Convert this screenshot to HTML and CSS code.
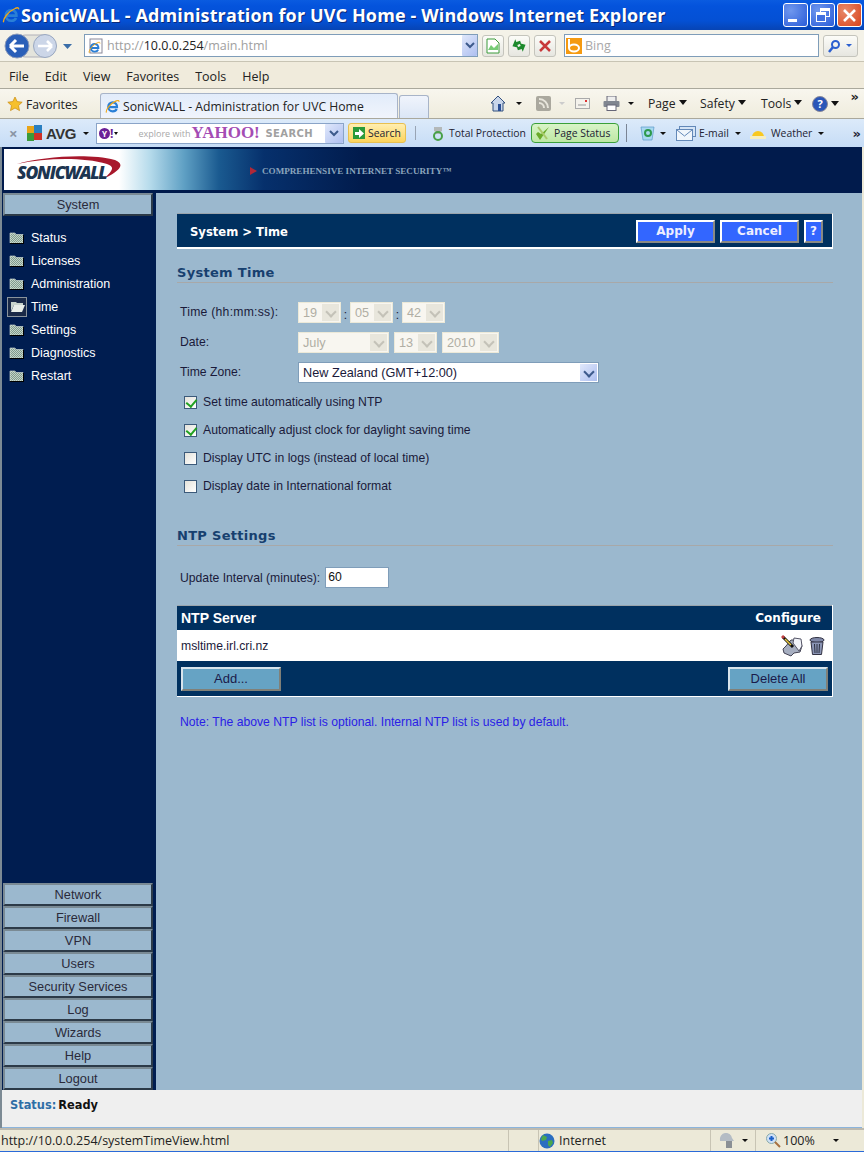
FILE: index.html
```html
<!DOCTYPE html>
<html lang="en">
<head>
    <meta charset="UTF-8">
    <title>SonicWALL - Administration for UVC Home</title>
    <link rel="stylesheet" href="styles.css">
</head>
<body>
    <svg class="defs" width="0" height="0">
        <defs>
            <pattern id="dither" width="2" height="2" patternUnits="userSpaceOnUse">
                <rect width="2" height="2" fill="#7f9a8c"/>
                <rect width="1" height="1" fill="#c4d4c8"/>
                <rect x="1" y="1" width="1" height="1" fill="#c4d4c8"/>
            </pattern>
        </defs>
        <symbol id="ie" viewBox="0 0 16 16">
            <path d="M3.6 8.6h9.2c.2-3-1.800-5-4.500-5-2.700 0-4.800 2-4.800 4.800 0 2.800 2 4.700 4.800 4.700 2 0 3.500-.9 4.200-2.500" fill="none" stroke="#2a7fd6" stroke-width="2.400"/>
            <path d="M1.500 14.500C.5 12 5 5 12 2c2-.8 3-.4 2.800 1" fill="none" stroke="#f0a818" stroke-width="1.200"/>
        </symbol>
        <symbol id="folder" viewBox="0 0 15 13">
            <path d="M1 2h5l1 1.500h7V12H1z" fill="url(#dither)" stroke="#dfe8df" stroke-width=".6"/>
            <path d="M1 12.500h14M14.500 4v9" stroke="#000" stroke-width="1"/>
        </symbol>
    </svg>

    <!-- Window title -->
    <div class="titlebar">
        <svg class="title-ie"><use href="#ie"/></svg>
        <span class="title-text">SonicWALL - Administration for UVC Home - Windows Internet Explorer</span>
        <div class="winbtns">
            <div class="winbtn"><span class="min-bar"></span></div>
            <div class="winbtn"><span class="max-back"></span><span class="max-front"></span></div>
            <div class="winbtn close">
                <svg width="15" height="15" viewBox="0 0 15 15"><path d="M2 2l11 11M13 2L2 13" stroke="#fff" stroke-width="2.600"/></svg>
            </div>
        </div>
    </div>

    <!-- Address bar -->
    <div class="addressbar">
        <svg class="nav-arrows" width="74" height="28" viewBox="0 0 74 28">
            <rect x="14" y="3" width="42" height="22" rx="11" fill="#e4e4dc" stroke="#b0b0b8"/>
            <circle cx="17" cy="14" r="12" fill="#2a5fb8" stroke="#8c9bb8"/>
            <path d="M10 14h14M10 14l6-6M10 14l6 6" stroke="#fff" stroke-width="3" fill="none"/>
            <circle cx="45" cy="14" r="11.500" fill="#ccd6e8" stroke="#9aa8c0"/>
            <path d="M52 14H38M52 14l-5-5M52 14l-5 5" stroke="#fff" stroke-width="2.600" fill="none"/>
            <path d="M63 12h9l-4.500 5z" fill="#3a6ea8"/>
        </svg>
        <div class="urlbox">
            <svg class="page-ie" viewBox="0 0 16 16"><rect x="2" y="1" width="12" height="14" fill="#fff" stroke="#889"/><use href="#ie" width="13" height="13" y="3" x="0"/></svg>
            <span class="url-dim">http://</span><span class="url-host">10.0.0.254</span><span class="url-dim">/main.html</span>
            <span class="xp-arrow url-arrow"><svg width="10" height="7" viewBox="0 0 10 7"><path d="M1 1l4 4 4-4" fill="none" stroke="#3d5a8c" stroke-width="2"/></svg></span>
        </div>
        <div class="toolbtn btn-compat">
            <svg width="14" height="16" viewBox="0 0 14 16"><path d="M1 1h8l4 4v10H1z" fill="#fff" stroke="#3a9a3a"/><path d="M2 12l3-5 3 3 4-4v6z" fill="#7c7"/></svg>
        </div>
        <div class="toolbtn btn-refresh">
            <svg width="16" height="15" viewBox="0 0 16 15"><path d="M1 6.500L6 1v3h4v3H6v3z" fill="#1d8a2c" transform="rotate(-20 6 6)"/><path d="M15 8.500L10 14v-3H6V8h4V5z" fill="#1d8a2c" transform="rotate(-20 10 9)"/></svg>
        </div>
        <div class="toolbtn btn-stop">
            <svg width="12" height="12" viewBox="0 0 12 12"><path d="M1 1l10 10M11 1L1 11" stroke="#c8383a" stroke-width="2.500"/></svg>
        </div>
        <div class="searchbox">
            <span class="bing-logo"><svg width="16" height="16" viewBox="0 0 16 16"><path d="M3 1v9" stroke="#fff" stroke-width="2"/><ellipse cx="8" cy="10" rx="5" ry="3.500" fill="none" stroke="#fff" stroke-width="2"/></svg></span>
            <span class="bing-text">Bing</span>
        </div>
        <div class="toolbtn btn-go">
            <svg width="14" height="14" viewBox="0 0 14 14"><circle cx="8.500" cy="5.500" r="3.500" fill="none" stroke="#2b5fd0" stroke-width="2"/><path d="M6 8l-4 5" stroke="#2b5fd0" stroke-width="2.500"/></svg>
            <span class="caret go-caret"></span>
        </div>
    </div>

    <!-- Menu -->
    <div class="menubar">
        <span>File</span><span>Edit</span><span>View</span><span>Favorites</span><span>Tools</span><span>Help</span>
    </div>

    <!-- Favorites and tabs -->
    <div class="tabbar">
        <svg class="star" width="16" height="16" viewBox="0 0 16 16"><path d="M8 1l2.200 4.600 5 .6-3.700 3.400 1 5L8 12l-4.500 2.600 1-5L.8 6.200l5-.6z" fill="#f6c02c" stroke="#c98a10" stroke-width=".7"/></svg>
        <span class="fav-label">Favorites</span>
        <div class="tab">
            <svg class="tab-ie"><use href="#ie"/></svg>
            <span>SonicWALL - Administration for UVC Home</span>
        </div>
        <div class="newtab"></div>
        <div class="cmdbar">
            <svg class="cmd-home" width="16" height="17" viewBox="0 0 16 17"><path d="M8 1L1 8h2v8h10V8h2z" fill="#c9d6ea" stroke="#33507f"/><rect x="8" y="9" width="3" height="7" fill="#2b4f94"/></svg>
            <span class="caret cmd-caret1"></span>
            <svg class="cmd-rss" width="15" height="15" viewBox="0 0 15 15"><rect width="15" height="15" rx="2" fill="#aaa89e"/><path d="M3 7a5 5 0 015 5M3 3a9 9 0 019 9" fill="none" stroke="#e8e6dc" stroke-width="2"/></svg>
            <span class="caret caret-dim"></span>
            <svg class="cmd-mail" width="15" height="11" viewBox="0 0 15 11"><rect x=".5" y=".5" width="14" height="10" fill="#f4f2ec" stroke="#aaa"/><path d="M3 7h8" stroke="#999"/><rect x="10" y="2" width="2" height="2" fill="#d33"/></svg>
            <svg class="cmd-print" width="17" height="15" viewBox="0 0 17 15"><rect x="4" y="0" width="9" height="6" fill="#eee" stroke="#667"/><rect x=".5" y="5" width="16" height="6" rx="1" fill="#808690"/><rect x="4" y="9" width="9" height="5.500" fill="#fff" stroke="#667"/></svg>
            <span class="caret cmd-caret2"></span>
            <span class="cmd-item cmd-page">Page<span class="caret big"></span></span>
            <span class="cmd-item cmd-safety">Safety<span class="caret big"></span></span>
            <span class="cmd-item cmd-tools">Tools<span class="caret big"></span></span>
            <span class="help-ball">?</span>
            <span class="caret big help-caret"></span>
            <span class="chevron cmd-chev">&raquo;</span>
        </div>
    </div>

    <!-- AVG toolbar -->
    <div class="avgbar">
        <span class="avg-x">&times;</span>
        <svg class="avg-logo" width="17" height="17" viewBox="0 0 17 17"><path d="M1 1h7v7H1z" fill="#e8a418"/><path d="M8 0h8v8H8z" fill="#2a7fc0"/><path d="M1 8h7v8H1z" fill="#3a9a3a"/><path d="M8 8h8v7H8z" fill="#d03028"/></svg>
        <span class="avg-name">AVG</span>
        <span class="caret avg-caret"></span>
        <div class="yahoo-box">
            <span class="y-badge">Y</span><span class="y-bang">!</span><span class="caret y-caret"></span>
            <span class="y-explore">explore with</span>
            <span class="y-name">YAHOO!</span>
            <span class="y-search">SEARCH</span>
            <span class="xp-arrow y-arrow"><svg width="10" height="7" viewBox="0 0 10 7"><path d="M1 1l4 4 4-4" fill="none" stroke="#3d5a8c" stroke-width="2"/></svg></span>
        </div>
        <div class="avg-search">
            <span class="go-icon"><svg width="9" height="9" viewBox="0 0 9 9"><path d="M0 3h4V0l5 4.500L4 9V6H0z" fill="#fff"/></svg></span>
            <span>Search</span>
        </div>
        <span class="dot-sep"></span>
        <svg class="tp-icon" width="12" height="15" viewBox="0 0 12 15"><path d="M2 1h8v4l-2 1v2h-4V6L2 5z" fill="#b4b8b8"/><circle cx="6" cy="10" r="4" fill="none" stroke="#48a048" stroke-width="2"/></svg>
        <span class="tp-label">Total Protection</span>
        <div class="page-status">
            <svg width="15" height="15" viewBox="0 0 15 15"><path d="M1 8l4 6 9-13-8 7-3-2z" fill="#6aaa2a"/><path d="M3 1l9 12" stroke="#a9c96a" stroke-width="2"/></svg>
            <span>Page Status</span>
        </div>
        <span class="bar-sep"></span>
        <svg class="bin-icon" width="15" height="16" viewBox="0 0 15 16"><path d="M1 2h13l-2 13H3z" fill="#a8d8f0" stroke="#5a9ac8" stroke-width=".7"/><circle cx="8" cy="8" r="3" fill="none" stroke="#2c9a4c" stroke-width="2"/></svg>
        <span class="caret bin-caret"></span>
        <svg class="mail-icon" width="20" height="15" viewBox="0 0 20 15"><rect x="3.500" y=".5" width="16" height="10" fill="#d4e4f6" stroke="#6288b8"/><rect x=".5" y="3.500" width="16" height="11" fill="#f0f6fc" stroke="#6288b8"/><path d="M1 4l7.500 6L16 4" fill="none" stroke="#6288b8"/></svg>
        <span class="mail-label">E-mail</span>
        <span class="caret mail-caret"></span>
        <svg class="sun-icon" width="16" height="14" viewBox="0 0 16 14"><path d="M2 11a6 6 0 0112 0z" fill="#f8c820"/><rect y="10" width="16" height="3" fill="#f6eec0"/></svg>
        <span class="weather-label">Weather</span>
        <span class="caret weather-caret"></span>
        <span class="chevron avg-chev">&raquo;</span>
    </div>

    <!-- Page -->
    <div class="page">
        <div class="banner">
            <div class="logo">
                <svg class="logo-arc" width="106" height="23" viewBox="0 0 106 23"><path d="M0 8C25 1 70-3 98 4c10 4 6 10-10 18 8-8 10-11 2-14C65 1 30 2 0 8z" fill="#a8182c"/></svg>
                <span class="logo-text">SONICWALL</span>
            </div>
            <span class="tagline-mark"></span>
            <span class="tagline">COMPREHENSIVE INTERNET SECURITY&trade;</span>
        </div>

        <div class="workarea">
            <div class="sidebar">
                <div class="navbtn">System</div>
                <div class="navlist">
                    <div class="navitem"><svg class="folder"><use href="#folder"/></svg>Status</div>
                    <div class="navitem"><svg class="folder"><use href="#folder"/></svg>Licenses</div>
                    <div class="navitem"><svg class="folder"><use href="#folder"/></svg>Administration</div>
                    <div class="navitem active">
                        <span class="open-folder"><svg width="15" height="13" viewBox="0 0 15 13"><path d="M1 2h5l1 1h6v2H4L1 11z" fill="#c8d4cc"/><path d="M4 5h11l-3 7H1z" fill="#e8eee8"/></svg></span>Time
                    </div>
                    <div class="navitem"><svg class="folder"><use href="#folder"/></svg>Settings</div>
                    <div class="navitem"><svg class="folder"><use href="#folder"/></svg>Diagnostics</div>
                    <div class="navitem"><svg class="folder"><use href="#folder"/></svg>Restart</div>
                </div>
                <div class="navbottom">
                    <div class="navbtn">Network</div>
                    <div class="navbtn">Firewall</div>
                    <div class="navbtn">VPN</div>
                    <div class="navbtn">Users</div>
                    <div class="navbtn">Security Services</div>
                    <div class="navbtn">Log</div>
                    <div class="navbtn">Wizards</div>
                    <div class="navbtn">Help</div>
                    <div class="navbtn">Logout</div>
                </div>
            </div>

            <div class="content">
                <div class="headbar">
                    <span class="crumb">System &gt; Time</span>
                    <div class="headbtns">
                        <div class="blue-btn wide">Apply</div>
                        <div class="blue-btn wide">Cancel</div>
                        <div class="blue-btn">?</div>
                    </div>
                </div>

                <h2 class="section-title first">System Time</h2>

                <div class="formrow row-time">
                    <span class="lbl">Time (hh:mm:ss):</span>
                    <div class="sel off w43"><span>19</span><i class="sel-arrow"></i></div>
                    <span class="colon">:</span>
                    <div class="sel off w43"><span>05</span><i class="sel-arrow"></i></div>
                    <span class="colon">:</span>
                    <div class="sel off w43"><span>42</span><i class="sel-arrow"></i></div>
                </div>
                <div class="formrow row-date">
                    <span class="lbl">Date:</span>
                    <div class="sel off w91"><span>July</span><i class="sel-arrow"></i></div>
                    <div class="sel off w43"><span>13</span><i class="sel-arrow"></i></div>
                    <div class="sel off w57"><span>2010</span><i class="sel-arrow"></i></div>
                </div>
                <div class="formrow row-zone">
                    <span class="lbl">Time Zone:</span>
                    <div class="sel w301"><span>New Zealand (GMT+12:00)</span><i class="sel-arrow on"></i></div>
                </div>

                <div class="checks">
                    <label class="check"><i class="box on"></i>Set time automatically using NTP</label>
                    <label class="check"><i class="box on"></i>Automatically adjust clock for daylight saving time</label>
                    <label class="check"><i class="box"></i>Display UTC in logs (instead of local time)</label>
                    <label class="check"><i class="box"></i>Display date in International format</label>
                </div>

                <h2 class="section-title second">NTP Settings</h2>

                <div class="interval">
                    <span>Update Interval (minutes):</span>
                    <div class="textinput">60</div>
                </div>

                <div class="ntp-table">
                    <div class="ntp-head"><span>NTP Server</span><span class="cfg">Configure</span></div>
                    <div class="ntp-row">
                        <span>msltime.irl.cri.nz</span>
                        <div class="row-icons">
                            <svg width="22" height="22" viewBox="0 0 22 22"><path d="M10 5l8 0 3 6-2 6-6 1-3 3-7-3-1-4 3-3z" fill="#a6aec0" stroke="#445"/><path d="M13 3l7 1 1 7-3 5-6-8z" fill="#f2f4fa" stroke="#556"/><path d="M2 2l10 10" stroke="#111" stroke-width="3"/><path d="M4 4l6 6" stroke="#e8c840" stroke-width="1.500"/><path d="M1 1l2 2" stroke="#c04040" stroke-width="3"/></svg>
                            <svg width="16" height="20" viewBox="0 0 16 20"><ellipse cx="8" cy="4" rx="7" ry="2.500" fill="#7f88a8" stroke="#334"/><path d="M2 6h12l-1.500 12.500h-9z" fill="#8a94b4" stroke="#334"/><path d="M5.500 8l.5 9M8 8v9M10.500 8l-.5 9" stroke="#2c3040"/></svg>
                        </div>
                    </div>
                    <div class="ntp-foot">
                        <div class="teal-btn add">Add...</div>
                        <div class="teal-btn">Delete All</div>
                    </div>
                </div>

                <p class="note">Note: The above NTP list is optional. Internal NTP list is used by default.</p>
            </div>
        </div>

        <div class="statusline"><span class="st-label">Status:</span> <span class="st-value">Ready</span></div>
    </div>

    <!-- Browser status bar -->
    <div class="iestatus">
        <span class="ie-url">http://10.0.0.254/systemTimeView.html</span>
        <span class="ie-cell"></span>
        <div class="zone">
            <svg width="16" height="16" viewBox="0 0 16 16"><circle cx="8" cy="8" r="7.500" fill="#2a6ec0"/><path d="M4 2l4 2-1 3-4 1-1-2zM9 8l4-1 1 3-3 4-2-2z" fill="#4ca84c"/></svg>
            <span>Internet</span>
        </div>
        <div class="protect">
            <svg width="16" height="15" viewBox="0 0 16 15"><path d="M1 7a6 6 0 0112-2l2 3H1z" fill="#b4bcc4"/><rect x="7" y="8" width="6" height="7" fill="#8a8f94"/></svg>
            <span class="caret"></span>
        </div>
        <div class="zoomctl">
            <svg width="15" height="15" viewBox="0 0 15 15"><circle cx="5.500" cy="5.500" r="5" fill="#cfe0f6" stroke="#8aa"/><path d="M3 5.500h5M5.500 3v5" stroke="#1a5fc8" stroke-width="2"/><path d="M9 9l5 5" stroke="#a87040" stroke-width="2"/></svg>
            <span>100%</span>
            <span class="caret zoom-caret"></span>
        </div>
    </div>
    <div class="bottomline"></div>
</body>
</html>
```

FILE: styles.css
```css
* {
    box-sizing: border-box;
}

body {
    margin: 0;
    width: 864px;
    height: 1152px;
    overflow: hidden;
    display: flex;
    flex-direction: column;
    font-family: "Liberation Sans", Arial, sans-serif;
    font-size: 12.2px;
    color: #1a1a2a;
    background: #ece9d8;
}

.defs {
    position: absolute;
}

.caret {
    display: inline-block;
    width: 0;
    height: 0;
    border-left: 3px solid transparent;
    border-right: 3px solid transparent;
    border-top: 3px solid #111;
}

.caret.big {
    border-left-width: 4px;
    border-right-width: 4px;
    border-top-width: 5px;
    margin-left: 3px;
    vertical-align: 3px;
}

.chevron {
    font-family: "DejaVu Sans", sans-serif;
    font-size: 13px;
    font-weight: bold;
    line-height: 1;
}

.xp-arrow {
    display: flex;
    align-items: center;
    justify-content: center;
    background: linear-gradient(135deg, #e0e8fb, #aebff0);
    border-radius: 1px;
}

/* Window title */
.titlebar {
    height: 30px;
    flex: none;
    display: flex;
    align-items: center;
    padding: 0 2px 0 2px;
    background: linear-gradient(#0a5be0, #0453dc 20%, #0450d4 70%, #0744b4);
}

.title-ie {
    width: 18px;
    height: 18px;
    margin-right: 1px;
}

.title-text {
    font-family: "Open Sans", sans-serif;
    font-weight: bold;
    font-size: 18px;
    letter-spacing: .13px;
    color: #fff;
    white-space: nowrap;
    text-shadow: 1px 1px 0 #0a2a78;
}

.winbtns {
    margin-left: auto;
    display: flex;
    gap: 2px;
}

.winbtn {
    width: 25px;
    height: 24px;
    border: 1px solid #fff;
    border-radius: 3px;
    background: radial-gradient(circle at 30% 30%, #6f97ee, #2a5cd8);
    position: relative;
    display: flex;
    align-items: center;
    justify-content: center;
}

.winbtn.close {
    background: radial-gradient(circle at 30% 30%, #e88a6a, #d8431c);
}

.min-bar {
    position: absolute;
    left: 4px;
    bottom: 4px;
    width: 9px;
    height: 3px;
    background: #fff;
}

.max-back,
.max-front {
    position: absolute;
    border: 1px solid #fff;
    border-top-width: 3px;
}

.max-back {
    left: 9px;
    top: 4px;
    width: 10px;
    height: 9px;
}

.max-front {
    left: 5px;
    top: 8px;
    width: 10px;
    height: 10px;
    background: #3f6fe0;
}

/* Address bar */
.addressbar {
    height: 32px;
    flex: none;
    display: flex;
    align-items: center;
    background: #f4f2e8;
    border-bottom: 1px solid #c8c4b4;
}

.nav-arrows {
    margin-right: 10px;
    flex: none;
}

.urlbox {
    width: 394px;
    height: 23px;
    display: flex;
    align-items: center;
    padding-left: 3px;
    background: #fff;
    border: 1px solid #7f9db9;
    font-family: "Open Sans", sans-serif;
    font-size: 12.500px;
    position: relative;
}

.page-ie {
    width: 16px;
    height: 16px;
    margin-right: 3px;
}

.url-dim {
    color: #a0a0a0;
}

.url-host {
    color: #222;
}

.url-arrow {
    position: absolute;
    top: 0;
    right: 0;
    width: 15px;
    height: 21px;
}

.toolbtn {
    width: 22px;
    height: 22px;
    display: flex;
    align-items: center;
    justify-content: center;
    border: 1px solid #c4c4bc;
    border-radius: 3px;
    background: linear-gradient(#fcfcf8, #e6e6e0);
    flex: none;
}

.btn-compat {
    margin-left: 4px;
}

.btn-refresh,
.btn-stop {
    margin-left: 4px;
}

.searchbox {
    width: 255px;
    height: 23px;
    margin-left: 8px;
    display: flex;
    align-items: center;
    gap: 3px;
    background: #fff;
    border: 1px solid #7f9db9;
}

.bing-logo {
    width: 16px;
    height: 16px;
    margin-left: 1px;
    background: #f59a10;
}

.bing-logo svg {
    display: block;
}

.bing-text {
    font-family: "Open Sans", sans-serif;
    font-size: 12.500px;
    color: #a8a8a8;
}

.btn-go {
    width: 35px;
    margin-left: 4px;
    gap: 5px;
    justify-content: flex-start;
    padding-left: 3px;
}

.go-caret {
    border-top-color: #2b5fd0;
}

/* Menu */
.menubar {
    height: 27px;
    flex: none;
    display: flex;
    align-items: center;
    gap: 16px;
    padding: 2px 0 0 9px;
    font-family: "Open Sans", sans-serif;
    font-size: 12.500px;
    color: #222;
    background: #f0ebdc;
    border-bottom: 1px solid #aaa89c;
}

/* Favorites and tabs */
.tabbar {
    height: 30px;
    flex: none;
    display: flex;
    align-items: flex-end;
    font-family: "Open Sans", sans-serif;
    font-size: 12.200px;
    color: #222;
    background: linear-gradient(#f8f6ee, #efecdd);
    border-bottom: 1px solid #aaa89c;
    position: relative;
}

.star {
    margin: 0 3px 6px 7px;
}

.fav-label {
    width: 74px;
    margin-bottom: 5px;
}

.tab {
    width: 298px;
    height: 25px;
    display: flex;
    align-items: center;
    gap: 3px;
    padding-left: 4px;
    background: linear-gradient(#e2ecfa, #f0f4fc);
    border: 1px solid #a8b4c8;
    border-bottom: none;
    border-radius: 3px 3px 0 0;
}

.tab-ie {
    width: 15px;
    height: 15px;
}

.newtab {
    width: 30px;
    height: 23px;
    margin-left: 1px;
    background: linear-gradient(#f0f4fc, #dbe6f6);
    border: 1px solid #a8b4c8;
    border-bottom: none;
    border-radius: 3px 3px 0 0;
}

.cmdbar {
    display: flex;
    align-items: center;
    height: 29px;
    align-self: flex-start;
    position: relative;
    flex: 1;
}

.cmd-home {
    margin-left: 61px;
}

.cmd-caret1 {
    margin-left: 10px;
}

.cmd-rss {
    margin-left: 14px;
}

.caret-dim {
    margin-left: 8px;
    border-top-color: #ccc;
}

.cmd-mail {
    margin-left: 10px;
}

.cmd-print {
    margin-left: 13px;
}

.cmd-caret2 {
    margin-left: 8px;
}

.cmd-item {
    white-space: nowrap;
}

.cmd-page {
    margin-left: 14px;
    width: 52px;
}

.cmd-safety {
    width: 61px;
}

.cmd-tools {
    width: 51px;
}

.help-ball {
    width: 16px;
    height: 16px;
    border-radius: 50%;
    background: #2a56b8;
    border: 1px solid #889;
    color: #fff;
    font-weight: bold;
    font-size: 11px;
    line-height: 14px;
    text-align: center;
}

.help-caret {
    margin-left: 1px;
}

.cmd-chev {
    position: absolute;
    right: 5px;
    top: 1px;
}

/* AVG toolbar */
.avgbar {
    height: 28px;
    flex: none;
    display: flex;
    align-items: center;
    font-family: "Open Sans", sans-serif;
    font-size: 10.400px;
    color: #223;
    background: linear-gradient(#dceafa, #c6dcf6);
    position: relative;
}

.avg-x {
    width: 26px;
    padding-left: 9px;
    font-size: 15px;
    font-weight: bold;
    color: #8a94a4;
}

.avg-name {
    margin-left: 3px;
    width: 37px;
    font-family: "Liberation Sans", sans-serif;
    font-weight: bold;
    font-size: 15px;
    letter-spacing: -.5px;
    color: #333;
}

.avg-caret {
    margin-right: 7px;
}

.yahoo-box {
    width: 248px;
    height: 21px;
    display: flex;
    align-items: center;
    background: #fff;
    border: 1px solid #8aa4c8;
    position: relative;
}

.y-badge {
    width: 11px;
    height: 11px;
    margin-left: 2px;
    border-radius: 50%;
    background: #6b1f96;
    color: #fff;
    font-size: 8px;
    font-weight: bold;
    line-height: 11px;
    text-align: center;
}

.y-bang {
    font-weight: bold;
    font-size: 12px;
    color: #6b1f96;
}

.y-caret {
    margin-left: 1px;
    border-left-width: 2px;
    border-right-width: 2px;
}

.y-explore {
    margin-left: 20px;
    font-size: 9px;
    color: #a8a8a8;
    width: 53px;
    white-space: nowrap;
}

.y-name {
    font-family: "Liberation Serif", serif;
    font-weight: bold;
    font-size: 17px;
    color: #a44cb4;
    width: 74px;
    white-space: nowrap;
}

.y-search {
    font-family: "DejaVu Sans", sans-serif;
    font-weight: bold;
    font-size: 10px;
    letter-spacing: .4px;
    color: #a0a0a0;
}

.y-arrow {
    position: absolute;
    right: 0;
    top: 0;
    width: 18px;
    height: 19px;
}

.avg-search {
    width: 58px;
    height: 20px;
    margin-left: 4px;
    display: flex;
    align-items: center;
    gap: 3px;
    padding-left: 4px;
    border: 1px solid #e8c050;
    border-radius: 3px;
    background: linear-gradient(#ffeeb0, #fcd45c);
}

.go-icon {
    width: 12px;
    height: 12px;
    display: flex;
    align-items: center;
    justify-content: center;
    background: #2a9a3a;
}

.dot-sep {
    width: 1px;
    height: 14px;
    margin-left: 9px;
    background: #98a4b4;
}

.tp-icon {
    margin-left: 16px;
}

.tp-label {
    margin-left: 5px;
    width: 82px;
    white-space: nowrap;
}

.page-status {
    width: 88px;
    height: 20px;
    display: flex;
    align-items: center;
    gap: 4px;
    padding-left: 3px;
    border: 1px solid #3aa03a;
    border-radius: 4px;
    background: linear-gradient(#d8f4c8, #bee8a4);
}

.bar-sep {
    width: 1px;
    height: 18px;
    margin-left: 7px;
    background: #7a8494;
}

.bin-icon {
    margin-left: 13px;
}

.bin-caret {
    margin-left: 5px;
}

.mail-icon {
    margin-left: 10px;
}

.mail-label {
    margin-left: 3px;
    width: 36px;
}

.sun-icon {
    margin-left: 9px;
}

.weather-label {
    margin-left: 5px;
    width: 47px;
}

.avg-chev {
    position: absolute;
    right: 3px;
    top: 8px;
}

/* Page */
.page {
    flex: 1;
    display: flex;
    flex-direction: column;
    margin: 0 2px 0 0;
    border-left: 2px solid #7c8a94;
    background: #9bb8ce;
    min-height: 0;
}

.banner {
    height: 46px;
    flex: none;
    display: flex;
    align-items: center;
    border: solid #001a4c;
    border-width: 2px 0 3px 2px;
    background: linear-gradient(90deg, #fff 0, #fff 115px, #b8dcec 145px, #5fa0c4 180px, #1a5a90 215px, #06306c 260px, #011b4c 360px);
}

.logo {
    width: 246px;
    height: 100%;
    position: relative;
    display: flex;
    align-items: flex-end;
}

.logo-arc {
    position: absolute;
    left: 13px;
    top: 7px;
}

.logo-text {
    margin: 0 0 6px 13px;
    font-family: "Open Sans", sans-serif;
    font-style: italic;
    font-weight: 800;
    font-size: 17.500px;
    letter-spacing: -1.200px;
    color: #1c3550;
    position: relative;
}

.tagline-mark {
    border-left: 7px solid #b02838;
    border-top: 4px solid transparent;
    border-bottom: 4px solid transparent;
    margin: 2px 5px 0 0;
}

.tagline {
    margin-top: 2px;
    font-family: "Liberation Serif", serif;
    font-size: 9.100px;
    font-weight: bold;
    color: #8aa4bc;
    white-space: nowrap;
}

.workarea {
    flex: 1;
    display: flex;
    min-height: 0;
}

.sidebar {
    width: 154px;
    flex: none;
    display: flex;
    flex-direction: column;
    padding: 0 3px 0 1px;
    background: #001d50;
}

.navbtn {
    height: 23px;
    line-height: 20px;
    text-align: center;
    font-size: 12.800px;
    background: #9bb8ce;
    border: 2px solid;
    border-color: #7a8a94 #2c3a48 #2c3a48 #7a8a94;
    color: #2a2a3a;
    flex: none;
}

.navlist {
    flex: 1;
    padding-top: 10px;
}

.navitem {
    height: 23px;
    display: flex;
    align-items: center;
    font-size: 12.500px;
    color: #fff;
    padding-left: 6px;
}

.folder {
    width: 15px;
    height: 13px;
    margin-right: 7px;
}

.active {
    padding-left: 5px;
}

.open-folder {
    width: 20px;
    height: 20px;
    margin-right: 4px;
    margin-left: -1px;
    display: flex;
    align-items: center;
    justify-content: center;
    border: 1px solid #8a949c;
    background: #1a2a48;
}

.open-folder svg {
    display: block;
}

.navbottom {
    display: flex;
    flex-direction: column;
}

/* Content */
.content {
    flex: 1;
    padding: 20px 29px 0 21px;
    min-width: 0;
    color: #1a1a3a;
}

.headbar {
    height: 36px;
    display: flex;
    align-items: center;
    justify-content: space-between;
    padding: 2px 9px 0 13px;
    background: #00305f;
    border: solid #fff;
    border-width: 0 1px 2px 0;
    border-top: 1px solid #9aa4ac;
}

.crumb {
    font-family: "DejaVu Sans", sans-serif;
    font-weight: bold;
    font-size: 11.600px;
    color: #fff;
}

.headbtns {
    display: flex;
    gap: 5px;
}

.blue-btn {
    min-width: 19px;
    height: 23px;
    padding: 0 4px;
    line-height: 19px;
    text-align: center;
    font-family: "DejaVu Sans", sans-serif;
    font-weight: bold;
    font-size: 12px;
    color: #eef;
    background: #3366ff;
    border: 2px solid;
    border-color: #fff #8a8a84 #8a8a84 #fff;
}

.blue-btn.wide {
    width: 79px;
}

.section-title {
    margin: 0;
    font-family: "DejaVu Sans", sans-serif;
    font-weight: bold;
    font-size: 13px;
    letter-spacing: .3px;
    color: #17406f;
    border-bottom: 1px solid #a8a8a8;
}

.section-title.first {
    margin-top: 15px;
    height: 19px;
    line-height: 17px;
}

.section-title.second {
    margin-top: 28px;
    height: 18px;
    line-height: 16px;
}

.formrow {
    display: flex;
    align-items: center;
}

.row-time {
    margin-top: 19px;
    height: 21px;
}

.row-time .lbl {
    letter-spacing: .25px;
}

.row-date {
    margin-top: 9px;
    height: 21px;
    gap: 5px;
}

.row-zone {
    margin-top: 9px;
    height: 21px;
}

.lbl {
    width: 121px;
    padding: 0 0 2px 3px;
    flex: none;
}

.row-date .lbl {
    margin-right: -5px;
}

.sel {
    height: 21px;
    display: flex;
    align-items: center;
    justify-content: space-between;
    padding: 1px 1px 1px 4px;
    background: #fff;
    border: 1px solid #7f9db9;
    font-size: 12.700px;
    color: #1a1a3a;
}

.sel.off {
    color: #b0aea4;
    background: #f8f6f0;
    border-color: #ece9d8;
}

.w43 {
    width: 43px;
}

.w57 {
    width: 57px;
}

.w91 {
    width: 91px;
}

.w301 {
    width: 301px;
}

.sel-arrow {
    width: 17px;
    height: 17px;
    display: block;
    background: #e8e6dc;
    position: relative;
}

.sel-arrow.on {
    background: linear-gradient(135deg, #e0e8fb, #aebff0);
}

.sel-arrow::after {
    content: "";
    position: absolute;
    left: 5px;
    top: 4px;
    width: 6px;
    height: 6px;
    border: solid #c4c2b8;
    border-width: 0 2px 2px 0;
    transform: rotate(45deg);
}

.sel-arrow.on::after {
    border-color: #3d5a8c;
}

.colon {
    width: 9px;
    text-align: center;
    padding-top: 4px;
}

.checks {
    margin-top: 5px;
}

.check {
    height: 28px;
    display: flex;
    align-items: center;
    gap: 6px;
    padding-left: 7px;
}

.box {
    width: 13px;
    height: 13px;
    display: block;
    border: 1px solid #3c5a7a;
    background: linear-gradient(135deg, #e4e2da, #fff);
    position: relative;
}

.box.on::after {
    content: "";
    position: absolute;
    left: 3px;
    top: 0;
    width: 5px;
    height: 8px;
    border: solid #21a121;
    border-width: 0 2px 2px 0;
    transform: rotate(40deg);
}

.interval {
    height: 21px;
    margin-top: 21px;
    display: flex;
    align-items: center;
    padding-left: 3px;
    gap: 5px;
}

.textinput {
    width: 64px;
    height: 21px;
    line-height: 19px;
    padding-left: 2px;
    background: #fff;
    border: 1px solid #7f9db9;
    color: #111;
}

.ntp-table {
    margin-top: 17px;
    border: solid #fff;
    border-width: 0 1px 1px 0;
}

.ntp-head {
    height: 25px;
    display: flex;
    align-items: center;
    justify-content: space-between;
    padding: 0 11px 0 4px;
    font-family: "Liberation Sans", sans-serif;
    font-weight: bold;
    font-size: 14px;
    color: #fff;
    background: #00305f;
    border-top: 1px solid #9aa4ac;
}

.cfg {
    font-family: "DejaVu Sans", sans-serif;
    font-size: 12px;
}

.ntp-row {
    height: 31px;
    display: flex;
    align-items: center;
    justify-content: space-between;
    padding: 0 7px 0 4px;
    background: #fff;
}

.row-icons {
    display: flex;
    align-items: center;
    gap: 6px;
}

.ntp-foot {
    height: 35px;
    display: flex;
    align-items: center;
    justify-content: space-between;
    padding: 0 4px;
    background: #00305f;
}

.teal-btn {
    width: 100px;
    height: 24px;
    line-height: 19px;
    text-align: center;
    font-size: 13px;
    color: #1a1a4a;
    background: #66a3c4;
    border: 2px solid;
    border-color: #d8e4ec #808078 #808078 #d8e4ec;
}

.note {
    margin: 18px 0 0 3px;
    color: #2a20e6;
}

/* Status line */
.statusline {
    height: 38px;
    flex: none;
    padding: 8px 0 0 8px;
    font-family: "DejaVu Sans", sans-serif;
    font-size: 11.400px;
    font-weight: bold;
    word-spacing: -2px;
    background: #efefef;
    border-bottom: 1px solid #8cb4dc;
    color: #111;
}

.st-label {
    color: #2e6ea6;
}

/* Browser status bar */
.iestatus {
    height: 23px;
    flex: none;
    display: flex;
    align-items: stretch;
    font-family: "Open Sans", sans-serif;
    font-size: 12.500px;
    color: #222;
    background: #ece9d8;
    border-top: 2px solid #bdbab0;
}

.ie-url {
    width: 508px;
    padding: 2px 0 0 1px;
    white-space: nowrap;
}

.ie-cell {
    width: 30px;
    border-left: 1px solid #c8c4b4;
}

.zone {
    width: 172px;
    display: flex;
    align-items: center;
    gap: 4px;
    border-left: 1px solid #c8c4b4;
}

.protect {
    width: 45px;
    display: flex;
    align-items: center;
    gap: 7px;
    padding-left: 8px;
    border-left: 1px solid #c8c4b4;
}

.zoomctl {
    display: flex;
    align-items: center;
    gap: 2px;
    padding-left: 10px;
    border-left: 1px solid #c8c4b4;
}

.zoom-caret {
    margin-left: 16px;
}

.bottomline {
    height: 1px;
    flex: none;
    background: #2a6ad8;
}
```
